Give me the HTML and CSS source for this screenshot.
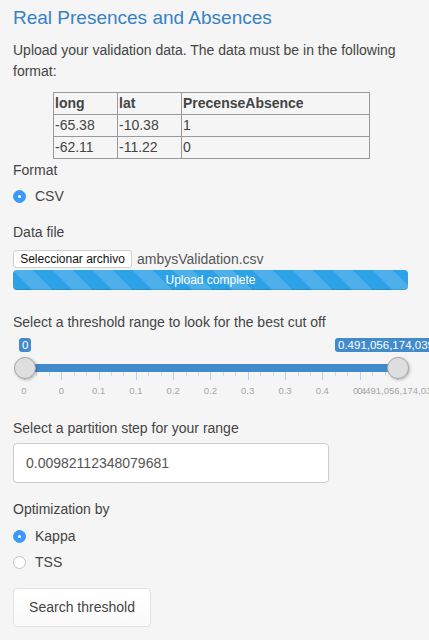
FILE: index.html
```html
<!DOCTYPE html>
<html>
<head>
<meta charset="utf-8">
<link rel="stylesheet" href="styles.css">
</head>
<body>
<div class="panel">
  <h4 class="title">Real Presences and Absences</h4>
  <p class="intro">Upload your validation data. The data must be in the following format:</p>
  <table class="fmt">
    <tr><th class="c1">long</th><th class="c2">lat</th><th class="c3">PrecenseAbsence</th></tr>
    <tr><td>-65.38</td><td>-10.38</td><td>1</td></tr>
    <tr><td>-62.11</td><td>-11.22</td><td>0</td></tr>
  </table>

  <div class="label l-format">Format</div>
  <div class="radio r-csv"><span class="dot on"></span><span>CSV</span></div>

  <div class="label l-file">Data file</div>
  <div class="filerow">
    <span class="filebtn">Seleccionar archivo</span>
    <span class="filename">ambysValidation.csv</span>
  </div>
  <div class="progress">Upload complete</div>

  <div class="label l-range">Select a threshold range to look for the best cut off</div>
  <div class="slider">
    <span class="tag tag-from">0</span>
    <span class="tag tag-to">0.491,056,174,039</span>
    <div class="track"></div>
    <div class="grid" id="grid"></div>
    <span class="handle h-from"></span>
    <span class="handle h-to"></span>
  </div>

  <div class="label l-step">Select a partition step for your range</div>
  <div class="input">0.00982112348079681</div>

  <div class="label l-opt">Optimization by</div>
  <div class="radio r-kappa"><span class="dot on"></span><span>Kappa</span></div>
  <div class="radio r-tss"><span class="dot"></span><span>TSS</span></div>

  <div class="btn">Search threshold</div>
</div>
<script src="script.js"></script>
</body>
</html>
```

FILE: script.js
```js
(function () {
  var grid = document.getElementById('grid');
  var start = 11, step = 12.43;
  var labels = ['0', '0', '0.1', '0.1', '0.2', '0.2', '0.3', '0.3', '0.4', '0.4', '0.491,056,174,039'];
  for (var k = 0; k <= 30; k++) {
    var x = start + k * step;
    var t = document.createElement('span');
    t.className = 'tick' + (k % 3 === 0 ? ' major' : '');
    t.style.left = x.toFixed(1) + 'px';
    grid.appendChild(t);
    if (k % 3 === 0) {
      var l = document.createElement('span');
      l.className = 'gl';
      l.textContent = labels[k / 3];
      l.style.left = x.toFixed(1) + 'px';
      grid.appendChild(l);
    }
  }
})();
```

FILE: styles.css
```css
html, body {
  margin: 0;
  padding: 0;
  overflow-x: hidden;
}
body {
  background: #f5f5f5;
  font-family: "Liberation Sans", Arial, Helvetica, sans-serif;
  color: #444;
  font-size: 14px;
  width: 429px;
  height: 640px;
}
.panel {
  padding: 0 13px;
}
.title {
  margin: 8px 0 0;
  font-size: 19px;
  line-height: 20px;
  font-weight: normal;
  color: #3582c4;
}
.intro {
  margin: 12px 0 0;
  line-height: 21px;
  font-size: 14px;
}
.fmt {
  margin: 10px 0 0 40px;
  border-collapse: collapse;
  border: 1px solid #555;
  font-size: 14px;
  color: #444;
}
.fmt th, .fmt td {
  border: 1px solid #999;
  padding: 0 0 0 1px;
  height: 21px;
  line-height: 21px;
  text-align: left;
}
.fmt th { font-weight: bold; }
.fmt .c1 { width: 62px; }
.fmt .c2 { width: 62px; }
.fmt .c3 { width: 186px; }
.label {
  line-height: 20px;
  font-size: 14px;
}
.l-format { margin-top: 1px; }
.radio {
  display: flex;
  align-items: center;
  gap: 9px;
  height: 20px;
  line-height: 20px;
  font-size: 14px;
}
.r-csv { margin-top: 6px; }
.dot {
  width: 13px;
  height: 13px;
  border-radius: 50%;
  box-sizing: border-box;
  background: #fff;
  border: 1px solid #c4c4c4;
  position: relative;
  flex: none;
}
.dot.on {
  background: #3b99fc;
  border-color: #3b99fc;
}
.dot.on::after {
  content: "";
  position: absolute;
  left: 4px;
  top: 4px;
  width: 3px;
  height: 3px;
  border-radius: 50%;
  background: #fff;
}
.l-file { margin-top: 16px; }
.filerow {
  margin-top: 8px;
  display: flex;
  align-items: center;
  height: 18px;
  gap: 5px;
}
.filebtn {
  box-sizing: border-box;
  height: 18px;
  width: 119px;
  line-height: 16px;
  border: 1px solid #d0d0d0;
  border-radius: 3px;
  background: #fff;
  color: #111;
  font-size: 12px;
  text-align: center;
}
.filename {
  font-size: 14px;
  color: #555;
  line-height: 18px;
}
.progress {
  margin-top: 2px;
  width: 395px;
  height: 20px;
  line-height: 20px;
  border-radius: 4px;
  background-color: #2ea2e6;
  background-image: linear-gradient(45deg, rgba(255,255,255,.15) 25%, transparent 25%, transparent 50%, rgba(255,255,255,.15) 50%, rgba(255,255,255,.15) 75%, transparent 75%, transparent);
  background-size: 40px 40px;
  color: #fff;
  font-size: 12px;
  text-align: center;
  box-shadow: inset 0 -1px 0 rgba(0,0,0,.12);
}
.l-range { margin-top: 22px; }
.slider {
  position: relative;
  height: 72px;
}
.tag {
  position: absolute;
  top: 6px;
  height: 14px;
  line-height: 14px;
  padding: 0 3px;
  border-radius: 3px;
  background: #428bca;
  color: #fff;
  font-size: 11.5px;
  white-space: nowrap;
}
.tag-from { left: 6px; }
.tag-to { left: 322px; padding-right: 20px; }
.track {
  position: absolute;
  left: 12px;
  width: 373px;
  top: 32px;
  height: 8px;
  background: #428bca;
}
.grid {
  position: absolute;
  left: 0;
  top: 40px;
  width: 403px;
  height: 30px;
}
.tick {
  position: absolute;
  top: 0;
  width: 1px;
  height: 4px;
  background: #c9dcee;
}
.tick.major { height: 8px; background: #b9d2ea; }
.gl {
  position: absolute;
  top: 13px;
  font-size: 9.5px;
  color: #a6a6a6;
  transform: translateX(-50%);
  white-space: nowrap;
}
.handle {
  position: absolute;
  top: 25px;
  width: 22px;
  height: 22px;
  box-sizing: border-box;
  border-radius: 50%;
  background: #dedede;
  border: 1px solid #a9a9a9;
  box-shadow: 1px 1px 3px rgba(0,0,0,.25);
}
.h-from { left: 1px; }
.h-to { left: 374px; }
.l-step { margin-top: 14px; }
.input {
  margin-top: 5px;
  box-sizing: border-box;
  width: 316px;
  height: 40px;
  line-height: 38px;
  padding: 0 12px;
  background: #fff;
  border: 1px solid #ccc;
  border-radius: 4px;
  color: #555;
  font-size: 14px;
}
.l-opt { margin-top: 16px; }
.r-kappa { margin-top: 7px; }
.r-tss { margin-top: 6px; }
.btn {
  margin-top: 16px;
  box-sizing: border-box;
  width: 138px;
  height: 39px;
  line-height: 37px;
  text-align: center;
  background: linear-gradient(#fff, #fafafa);
  border: 1px solid #e2e2e2;
  border-radius: 4px;
  color: #444;
  font-size: 14px;
}
```
